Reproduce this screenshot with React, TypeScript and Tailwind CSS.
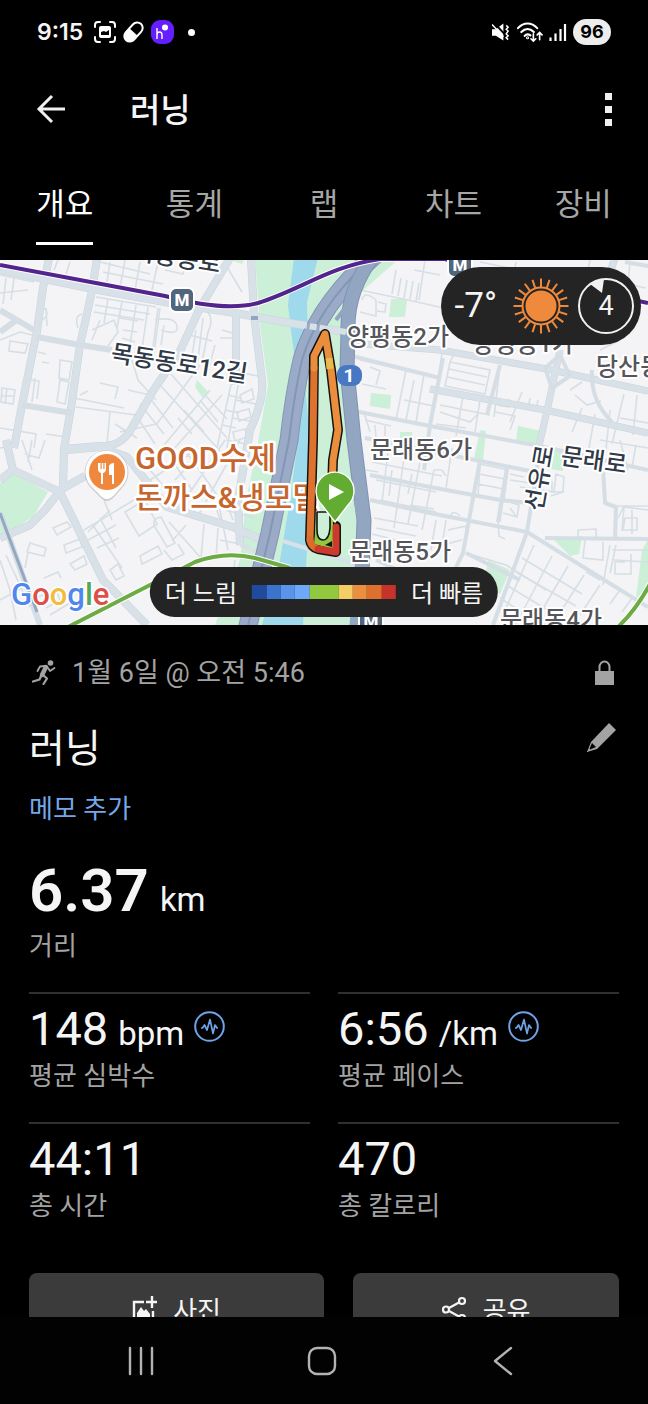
import React from 'react';

const tabs = ['개요', '통계', '랩', '차트', '장비'];

const stats = [
    { value: '148', unit: 'bpm', label: '평균 심박수', pulse: true },
    { value: '6:56', unit: '/km', label: '평균 페이스', pulse: true },
    { value: '44:11', unit: '', label: '총 시간', pulse: false },
    { value: '470', unit: '', label: '총 칼로리', pulse: false },
];

const StatusBar = () => (
    <div className="flex h-16 shrink-0 items-center justify-between pl-[37px] pr-[37px]">
        <div className="flex items-center gap-[7px]">
            <span className="mr-1 font-['Inter',sans-serif] text-[23px] font-semibold leading-8">9:15</span>
            <svg width="22" height="22" viewBox="0 0 22 22" fill="none" stroke="#fff" strokeWidth="2" strokeLinecap="round">
                <path d="M1 6V4a3 3 0 0 1 3-3h2M16 1h2a3 3 0 0 1 3 3v2M21 16v2a3 3 0 0 1-3 3h-2M6 21H4a3 3 0 0 1-3-3v-2" />
                <path d="M7 5h8a2 2 0 0 1 2 2v8a2 2 0 0 1-2 2H7a2 2 0 0 1-2-2V7a2 2 0 0 1 2-2z" fill="#fff" stroke="none" />
                <path d="M7 14v-3l3-1 2 1 3-2v5z" fill="#000" stroke="none" />
            </svg>
            <svg width="21" height="22" viewBox="0 0 21 22">
                <g transform="rotate(42 10.5 11)">
                    <rect x="5" y="0" width="11" height="22" rx="5.5" fill="none" stroke="#fff" strokeWidth="2" />
                    <path d="M5 11h11v5.500a5.500 5.500 0 0 1-11 0z" fill="#fff" />
                </g>
            </svg>
            <svg width="23" height="24" viewBox="0 0 23 24">
                <rect width="23" height="24" rx="9" fill="#651fff" />
                <path d="M6 8v11M6 15c0-4 5-4 5 0v4" fill="none" stroke="#fff" strokeWidth="1.400" />
                <circle cx="14" cy="7.500" r="3" fill="#fff" />
            </svg>
            <span className="ml-[7px] size-[7px] rounded-full bg-white" />
        </div>
        <div className="flex items-center gap-[6px]">
            <svg width="18" height="19" viewBox="0 0 19 19" fill="none" stroke="#fff" strokeWidth="1.600">
                <path d="M0 6h4l8-6v18l-8-5H0z" fill="#fff" stroke="none" />
                <path d="M2 -1l12 13" stroke="#000" strokeWidth="2" />
                <path d="M0 1l12 13" strokeWidth="1.600" />
                <path d="M15 2l2 2-2 2 2 2-2 3 2 2-2 2 2 2" />
            </svg>
            <svg width="27" height="22" viewBox="0 0 28 22" fill="none" stroke="#fff" strokeWidth="2.200" strokeLinecap="round">
                <path d="M2 7c6-6.500 14-6.500 20 0M5.500 11c4-4 9-4 13 0M9 15c1.500-1.700 4-1.700 6-.5" />
                <circle cx="12" cy="17" r=".5" />
                <path d="M18 13v7M15.500 18l2.500 2.500 2.500-2.500M24.500 19v-7M22 14l2.500-2.500L27 14" strokeWidth="1.700" />
            </svg>
            <svg width="18" height="19" viewBox="0 0 18 19" stroke="#fff" strokeWidth="2.200">
                <path d="M1.500 14.500V18M6.500 10.500V18M11.500 6v12M16 1v17" />
            </svg>
            <span className="flex h-[26px] w-[38px] items-center justify-center rounded-full bg-[#ededed] font-['Inter',sans-serif] text-[18px] font-bold leading-none text-black">
                96
            </span>
        </div>
    </div>
);

const Station = ({ x, y }: { x: number; y: number }) => (
    <g>
        <rect x={x - 13} y={y - 13} width="26" height="26" rx="7" fill="#fff" />
        <rect x={x - 11} y={y - 11} width="22" height="22" rx="5" fill="#51657d" />
        <text x={x} y={y + 6} textAnchor="middle" fontSize="17" fontWeight="800" fill="#fff">M</text>
    </g>
);

const RouteMap = () => (
    <svg
        className="block h-[365px] w-full font-['Roboto','Noto_Sans_CJK_KR',sans-serif]"
        viewBox="0 260 648 365"
        preserveAspectRatio="xMidYMid slice"
        role="img"
        aria-label="러닝 경로 지도"
    >
        <rect y="260" width="648" height="365" fill="#f4f3f5" />

        {/* parks */}
        <g fill="#ccefd8">
            <path d="M255 258H400L352 300L344 360L354 440L364 530L350 625H215L240 560L246 500L257 448L268 385L260 325Z" />
            <path d="M0 483L12 473L48 492L33 517L0 537Z" />
            <path d="M197 380l12 13-6 5-8-11zM391 299h16l-2 18h-16zM371 393l20 2-1 14-20-3zM518 426l24 5-3 14-23-4zM480 430l6 1-3 30-9-2zM552 450l12 1-1 20-13-2zM554 540l28-4-3 18-9 2zM488 560l22 10-10 24-16-9zM642 550l6-10v50l-12 8zM400 432h12v8h-12zM225 258h20l-3 6z" />
        </g>

        {/* river */}
        <path
            d="M294 258H318L307 302L308 340L305 385L309 430L308 530L303 625H262L280 560L290 500L298 440L300 400L291 330L288 305Z"
            fill="#9fd9ec"
        />
        <path d="M312 340L322 330L346 355L353 440L357 540L352 570H310Z" fill="#ccefd8" />

        {/* side streets */}
        <g fill="none" stroke="#d6dfe5" strokeWidth="1.600">
            <path d="M100 262l50 12M103 272l60 12M110 262l-3 20M125 260l-5 28M140 262l-5 28M158 262l-6 28M165 270l18 4 3-12M96 297l60 10M95 305l55 9M94 312l50 8M108 299l-4 24M122 302l-5 26M136 305l-6 40M148 307l-6 42M158 308l-5 40M92 330l22-10 4 12-10 14M100 320l-8 20M120 318l18 3M123 330l14 2M122 338l13 4" />
            <path d="M155 320q20-4 22 6t-16 4M160 308l-6 45M164 325l-3 20M190 335l22 6M196 330l-4 26M203 318l-6 50M208 312q6 8 0 20l-6 30M215 345l-8 30" />
            <path d="M0 275l34 7M6 278l-3 26M14 278l-3 22M0 293l28-3M46 308l1 18M42 306q10 8 0 14M82 314q-8 2-4 14M58 260l-4 10M70 262l-4 12" />
            <path d="M10 341l18 3-3 9-16-2zM0 340l20-8 12 3M38 352l8 2M42 362l7 1M35 378l-3 24M31 380l8 1-2 18M60 360l12 2-3 18-10-2zM60 380l-3 22 8 2 4-22zM2 388l13 2-2 14-12-2zM7 388l-2 16M2 396h12" />
            <path d="M74 398l50 10M76 407l60 8M110 411l-3 33M100 383l18 4-3 12M128 390l22 5M80 395l8-4M132 360l6 20 18 20M160 385l60 66M171 374l56 64M200 365l-44 60M210 390l-50 60M222 395l-50 56M148 396l25 32M140 404l24 30M135 414l20 30M178 418l14 16M184 410l20 22M200 400l18 22M205 395l22 24M232 380l-15 68M239 380l-12 68M228 395l12 3M225 410l14 3M222 425l14 3M120 432l36-8M115 424l22 14M0 428l36 6-2 14M46 434l20 3" />
            <path d="M22 440l10 30M32 440l-4 22M45 440l-6 18-14-4M0 448l12-2M50 498l-15 22M30 543l16 5-2 8-17-4zM28 552l-3 16M53 528l14-6 4 5-14 8zM64 545l16-6 2 8-16 6zM70 564l14-8 3 8-12 6zM30 600l26-10 4 10-14 8M44 578l14-6 3 6M0 600l22-12M50 615l20-12M84 530l60-36M88 540l28-15M92 524l30 44M100 518l16 30M97 548l22-10M110 510l-22 22M104 500l8 20" />
            <path d="M125 512l20-12 12 24-18 12zM155 527q-4-8 6-10l14 26-8 4zM140 556l18-10 4 8-20 10zM164 550l8 10 12-6-6-10M110 570l8-6 6 12-8 4zM204 524l-3 34-32-36M186 525l-14 16M218 528l-2 30M158 580l20-9M150 480l40-26M150 470l30 36M172 460l20 30M185 450l32 45M205 448l-30 32M225 440l-40 60M240 440l-42 76M215 505l8 22M225 500l8 20" />
            <path d="M222 330l14 4M238 338h-18M236 400l20 4M232 418l24 4M226 440l20 4M240 395l12-6 2 10-12 4zM237 412l12-3 2 8-12 4zM233 432l12-3 2 8-12 4zM228 370l30 6M224 262l18 30" />
            <path d="M360 290l48 10M362 300q2-10 14 0v16l-16-4M378 302l8 2-1 8-8-1M396 270l-4 24M401 278l-3 18M407 280l-3 18M413 281l-3 18M419 283l-3 18M425 260l-6 40M414 270l26 5M408 300l40 9" />
            <path d="M360 360l80 18M362 384l24 5M370 367l10 4-4 14M406 370l-10 50M424 374l-8 48M444 340l-6 40M365 420l26 6M375 425l1 12M385 426v10M404 400l30 6M414 380l-8 40M364 412l6 20" />
            <path d="M450 362l40 8-5 24-40-8zM449 369l38 8M447 377l38 8M454 354l-4 8M500 365l-6 52M440 405l50 10M463 396l-7 40M480 400l-5 32M497 405l12 2v-8M522 392l-12 30M440 412l30 10 8-8M530 398l-2 12M538 400l-2 10M436 424l30 4M495 412l20 4-5 14M575 395l12 10 14-4M582 408l-10 24M570 390l12-8M595 414l-6 34M610 410l-4 40M624 394l-12 50M637 395l-4 40M590 340l5-22 20 5M600 350l20-10M590 260l-8 40M610 262l-6 36M630 262l-2 22 18 4M480 352l8 6M620 418l28 5M600 440l48 8M480 262l40 8M516 262l-3 16" />
            <path d="M452 448l-6 40M434 470h8l4 6M480 464l28 6-4 30-26-4zM479 474l26 5M478 484l26 5M507 470l-7 52M510 474l14 3M510 480l20 3M503 500l16 5-2 12-14-4M510 508l6 8M520 487l34 5 2-18 8 3-1 15-12 4M530 478l22 4v10h12M450 518q2-10 10-2M436 520l-5 30M446 520l-5 32M448 530l18-4v12M498 522l1 14 6 3M462 540l-16 4" />
            <path d="M466 553l40 12 40 25M578 540v-10l18-1v9M585 540l-2 18 20 2v-18M610 545l-7 40M612 550h36M614 560l34 2M616 545l-6 28M625 562h-10v12h16v-20M618 506h30M618 518l6-12h24M625 518h12v12h-14zM632 510v24M620 440l8 30M636 445l-4 22M648 510l-24-3-2 24" />
            <path d="M534 545l-32 72M552 556l-36 68M568 566l-34 58M584 575l-28 44M600 585l-20 30M522 558l60 36M516 572l60 34M508 586l56 34M500 598l40 26M600 580l-14-8M620 590l-10 14M632 598l-10 14" />
            <path d="M372 462l70 14M376 480l60 12M380 500l56 12M374 518l44 8M372 534l40 10M388 452l-6 50M404 458l-10 70M420 462l-12 62M434 470l-12 60M366 470l12 2M392 470l-3 26M412 474l-4 20M376 528l40 8M410 505l24 4" />
            <path d="M0 560l10 30 6 30M6 555l24 52M225 510l30 8M220 540l30 6M235 560l-4 30M218 500l10 50M200 570l40 20" />
        </g>

        {/* main roads */}
        <g fill="none" strokeLinejoin="round">
            <path
                d="M0 270L93 289L170 303L235 313L290 323L346 332M230 258L200 308L180 351L153 391L130 431Q120 447 100 446L64 449M43 288L49 258M236 310L236 385M251 258L254 315L262 380Q264 400 250 430L238 500L240 545M0 538L30 525L45 510L63 487L64 449L71 408L80 345L92 291L97 258M14 448L22 405L37 331L43 288M13 470L60 492L80 533L103 580L147 625M13 470L0 480M6 440L13 470M67 450L100 447L127 457L167 507L233 527L262 540M60 490L85 476"
                stroke="#c9d4dc"
                strokeWidth="8"
            />
            <path
                d="M0 270L93 289L170 303L235 313L290 323L346 332M230 258L200 308L180 351L153 391L130 431Q120 447 100 446L64 449M43 288L49 258M236 310L236 385M251 258L254 315L262 380Q264 400 250 430L238 500L240 545M0 538L30 525L45 510L63 487L64 449L71 408L80 345L92 291L97 258M14 448L22 405L37 331L43 288M13 470L60 492L80 533L103 580L147 625M13 470L0 480M6 440L13 470M67 450L100 447L127 457L167 507L233 527L262 540M60 490L85 476"
                stroke="#d8e1e7"
                strokeWidth="7"
            />
            <path d="M37 337L80 345M22 405L72 413M0 310L34 330M0 332L18 319M80 345L112 350M10 540L40 625M0 513L12 545" stroke="#d5dee5" strokeWidth="6" />
            <path d="M350 343L440 350L547 369L648 391M560 350L547 411L538 450M615 258L605 290L592 340M430 389L550 411L648 433" stroke="#c9d4dc" strokeWidth="7" />
            <path d="M350 343L440 350L547 369L648 391M560 350L547 411L538 450M615 258L605 290L592 340M430 389L550 411L648 433" stroke="#d8e1e7" strokeWidth="6" />
            <path d="M545 368L560 355L570 376L552 388ZM592 370Q590 400 612 422M443 358L430 425L424 470M500 365L487 415M352 356L440 378M354 411L430 426L540 446L648 470M365 438L480 461L545 474M370 475L430 487L500 500L530 503M370 500L430 513L527 532L648 607M480 460L463 553L440 600M507 468L498 522M540 450L527 532L493 625M603 467L605 503L616 507L615 537M545 538L648 539M466 553L520 580M625 262L648 266M376 560L420 580" stroke="#d5dee5" strokeWidth="4" />
            <path d="M0 513L10 540L37 612" stroke="#94a8c1" strokeWidth="3" />
            <path d="M283 541L352 563L375 575M240 545L265 555" stroke="#d8e1e7" strokeWidth="4" />
        </g>

        {/* expressways on both banks */}
        <g fill="none" strokeLinejoin="round">
            <path d="M375 255Q318 305 302 360Q294 395 289 440L270 533L247 630" stroke="#8296b6" strokeWidth="19" />
            <path d="M375 255Q318 305 302 360Q294 395 289 440L270 533L247 630" stroke="#9babc7" strokeWidth="17" />
            <path d="M375 255Q318 305 302 360Q294 395 289 440L270 533L247 630" stroke="#8296b6" strokeWidth="2" />
            <path d="M374 255Q347 290 348 330L347 370L354 440L364 520L360 630" stroke="#7f94b3" strokeWidth="15" />
            <path d="M374 255Q347 290 348 330L347 370L354 440L364 520L360 630" stroke="#92a5c1" strokeWidth="13" />
            <path d="M356 500L364 540L368 625L352 625L360 540" fill="#92a5c1" stroke="#92a5c1" strokeWidth="5" />
            <path d="M351 300L336 320M251 318h7" stroke="#92a5c1" strokeWidth="4" />
            <path d="M290 323L346 332" stroke="#d8e1e7" strokeWidth="6" strokeDasharray="7 3" />
        </g>

        {/* subway lines */}
        <g fill="none">
            <path d="M0 265L165 296Q225 312 258 303C300 290 330 266 380 259L440 258L470 265M560 284L648 303" stroke="#fff" strokeWidth="6" />
            <path d="M0 265L165 296Q225 312 258 303C300 290 330 266 380 259L440 258L470 265M560 284L648 303" stroke="#52258c" strokeWidth="4" />
            <path d="M68 627L150 585L195 562Q225 551 255 558L290 568M618 627Q636 610 650 584" stroke="#fff" strokeWidth="6" />
            <path d="M68 627L150 585L195 562Q225 551 255 558L290 568M618 627Q636 610 650 584" stroke="#6dac44" strokeWidth="4" />
        </g>

        <Station x={182} y={300} />
        <Station x={460} y={265} />
        <Station x={371} y={621} />

        {/* place names */}
        <g fontSize="24" fontWeight="500" fill="#55565b" stroke="#fff" strokeWidth="4" strokeLinejoin="round" paintOrder="stroke">
            <text x="347" y="345">양평동2가</text>
            <text x="472" y="352">양평동1가</text>
            <text x="596" y="375">당산동</text>
            <text x="370" y="458">문래동6가</text>
            <text x="349" y="560">문래동5가</text>
            <text x="500" y="628">문래동4가</text>
            <g fill="#303a49">
                <text transform="translate(110 361) rotate(9)">목동동로12길</text>
                <text transform="translate(132 259) rotate(9)">목동동로</text>
                <text transform="translate(560 464) rotate(8)">문래로</text>
                <text transform="translate(542 512) rotate(-80)">선유로</text>
            </g>
        </g>
        <g fontSize="31" fontWeight="500" fill="#c6662e" stroke="#fff" strokeWidth="5" strokeLinejoin="round" paintOrder="stroke">
            <text x="135" y="469">GOOD수제</text>
            <text x="135" y="508" fontSize="30">돈까스&amp;냉모밀</text>
        </g>

        <path d="M107 501Q103 501 98 495L91 488A22 22 0 1 1 122 488L116 495Q111 501 107 501Z" fill="#8a8a8a" opacity=".35" />
        <path d="M107 499Q103 499 98 493L91 486A21 21 0 1 1 122 486L116 493Q111 499 107 499Z" fill="#fff" />
        <circle cx="107" cy="472" r="18" fill="#ef883c" />
        <path d="M98 463v6q0 3 3 4v11h2v-11q3-1 3-4v-6h-1.500v6h-1.200v-6h-1.600v6h-1.200v-6zM109 466q1-3 5-3v21h-2v-9h-3z" fill="#fff" />

        {/* run track */}
        <g fill="none" strokeLinejoin="round" strokeLinecap="round">
            <path d="M332 490L333 460L338 430L331 370L325 334L314 356L313 440L310 540Q311 547 318 549L336 552L336 526" stroke="#14140f" strokeWidth="10" />
            <path d="M317 512L314 544L333 549L333 512Z" fill="#92c83e" stroke="none" />
            <path d="M317 512V530Q317 540 323 540Q329 540 330 528V512Z" fill="#ccefd8" stroke="#14140f" strokeWidth="1.600" />
            <path d="M325 545L332 541L332 547Z" fill="#14140f" stroke="none" />
            <path d="M314 368L313 440L310 540" stroke="#de722f" strokeWidth="7" />
            <path d="M332 490L333 460L338 430L331 370L325 334L314 356V368" stroke="#ea8e3d" strokeWidth="7" />
            <path d="M329 358L330 369" stroke="#e9b94c" strokeWidth="7" strokeLinecap="butt" />
            <path d="M310 540Q311 547 318 549" stroke="#dd6b2c" strokeWidth="7" />
            <path d="M318 549L336 552L336 527" stroke="#cb3a2c" strokeWidth="7" />
        </g>
        <path d="M335 522L322 505A19 19 0 1 1 348 505Z" fill="#63ac32" stroke="#fff" strokeWidth="1.400" />
        <path d="M329 484v16l15-8z" fill="#fff" />

        <rect x="337" y="365" width="25" height="21" rx="9" fill="#4877c3" />
        <text x="349" y="382" textAnchor="middle" fontSize="19" fontWeight="700" fill="#fff">1</text>

        <text x="11" y="605" fontSize="31" fontWeight="500" stroke="#fff" strokeWidth="3" paintOrder="stroke">
            <tspan fill="#5087ec">G</tspan>
            <tspan fill="#db5147">o</tspan>
            <tspan fill="#f0bd3e">o</tspan>
            <tspan fill="#5087ec">g</tspan>
            <tspan fill="#58a65c">l</tspan>
            <tspan fill="#db5147">e</tspan>
        </text>
    </svg>
);

const rays = Array.from({ length: 20 }, (_, i) => i * 18);

const Weather = () => (
    <div className="absolute right-[7px] top-[7px] flex h-[78px] items-center rounded-full bg-[#242424] pl-[14px] pr-[7px]">
        <span className="mr-4 text-[35px] leading-10">-7°</span>
        <svg className="mr-[9px]" width="56" height="56" viewBox="-28 -28 56 56" fill="none" stroke="#ef8a3c">
            <circle r="15.500" fill="#ef8a3c" stroke="none" />
            <circle r="18.500" strokeWidth="2" />
            {rays.map((a) => (
                <path key={a} d="M0-19V-27.500" strokeWidth="2" transform={`rotate(${a})`} />
            ))}
        </svg>
        <span className="relative flex size-14 items-center justify-center text-[27px] leading-none">
            <svg className="absolute inset-0" width="56" height="56" viewBox="0 0 56 56">
                <circle cx="28" cy="28" r="27" fill="none" stroke="#f2f2f2" strokeWidth="2" />
                <path d="M12 6Q18 2 26 1L24 15Z" fill="#f2f2f2" />
            </svg>
            4
        </span>
    </div>
);

const PaceLegend = () => (
    <div className="absolute bottom-2 left-1/2 flex h-[50px] -translate-x-1/2 items-center gap-[15px] whitespace-nowrap rounded-full bg-[#242424] px-[15px] text-2xl">
        <span className="pt-[3px]">더 느림</span>
        <span className="grid h-[14px] w-36 grid-cols-10">
            <i className="bg-[#204b9d]" />
            <i className="bg-[#3b74cf]" />
            <i className="bg-[#5796eb]" />
            <i className="bg-[#6da9f8]" />
            <i className="col-span-2 bg-[#92c83f]" />
            <i className="bg-[#f5cd67]" />
            <i className="bg-[#ea8f3f]" />
            <i className="bg-[#de702e]" />
            <i className="bg-[#c5332b]" />
        </span>
        <span className="pt-[3px]">더 빠름</span>
    </div>
);

const PulseIcon = () => (
    <svg width="31" height="31" viewBox="0 0 31 31" fill="none" stroke="#6ea3e6" strokeWidth="2" strokeLinejoin="round">
        <circle cx="15.500" cy="15.500" r="14.300" />
        <path d="M7 17h1.500l2-3 2.500 5 3-10.500 3 14 2-8.500 2 3h1" strokeWidth="1.700" />
    </svg>
);

const App = () => {
    return (
        <div className="flex h-screen flex-col bg-black font-['Roboto','Noto_Sans_CJK_KR',sans-serif] text-[#f5f5f5]">
            <StatusBar />

            <header className="flex h-[90px] shrink-0 items-center pl-[36px] pr-[36px]">
                <button type="button" aria-label="뒤로">
                    <svg width="30" height="30" viewBox="0 0 30 30" fill="none" stroke="#f0f0f0" strokeWidth="3">
                        <path d="M29 15H3M16 2L3 15l13 13" />
                    </svg>
                </button>
                <h1 className="ml-16 flex-1 pt-[3px] text-[33px] font-medium leading-10">러닝</h1>
                <button type="button" aria-label="더보기" className="flex flex-col gap-[6px]">
                    <i className="size-[7px] bg-[#f0f0f0]" />
                    <i className="size-[7px] bg-[#f0f0f0]" />
                    <i className="size-[7px] bg-[#f0f0f0]" />
                </button>
            </header>

            <nav className="grid h-[106px] shrink-0 grid-cols-5 pt-[31px] text-[31px] leading-10">
                {tabs.map((tab, i) => (
                    <a
                        key={tab}
                        href="#"
                        className={
                            i === 0
                                ? 'h-[60px] justify-self-center border-b-[3px] border-white text-white'
                                : 'h-[60px] justify-self-center text-[#a6a6a6]'
                        }
                    >
                        {tab}
                    </a>
                ))}
            </nav>

            <main className="min-h-0 flex-1 overflow-y-auto [scrollbar-width:none]">
                <div className="relative overflow-hidden">
                    <RouteMap />
                    <Weather />
                    <PaceLegend />
                </div>

                <section className="px-[29px] pb-8 pt-[27px]">
                    <div className="flex h-10 items-center text-[27px] text-[#a3a3a3]">
                        <svg className="ml-[3px] mr-4" width="24" height="25" viewBox="0 0 24 25" fill="none" stroke="#a3a3a3" strokeLinecap="round" strokeLinejoin="round">
                            <circle cx="18.500" cy="3" r="2.800" fill="#a3a3a3" stroke="none" />
                            <path d="M14 7l-4 8" strokeWidth="4.500" />
                            <path d="M13 6L8 6.500 5.500 11M16 8l2 3 4.500-3" strokeWidth="1.800" />
                            <path d="M11 15l4 3.500-3.500 5.500M9.500 15L7.500 19.500 1 21.500" strokeWidth="2.200" />
                        </svg>
                        <span className="flex-1 pt-[3px]">1월 6일 @ 오전 5:46</span>
                        <svg className="mr-[5px]" width="19" height="25" viewBox="0 0 19 25">
                            <path d="M4.500 12V7a5 5.500 0 0 1 10 0v5" fill="none" stroke="#a3a3a3" strokeWidth="2" />
                            <path d="M0 11h19v14H0z" fill="#a3a3a3" />
                        </svg>
                    </div>

                    <div className="mt-[31px] flex h-12 items-center justify-between">
                        <h2 className="pt-[3px] text-[39px] leading-[48px]">러닝</h2>
                        <button type="button" aria-label="편집" className="mb-5 mr-[2px]">
                            <svg width="31" height="31" viewBox="0 0 31 31">
                                <path d="M1 30L5 20 23 1l7 7-19 19z" fill="#a3a3a3" />
                                <path d="M3 28l3-7 4 4z" fill="#000" />
                                <path d="M1 30l3-3" stroke="#a3a3a3" />
                            </svg>
                        </button>
                    </div>

                    <a href="#" className="mt-[22px] block w-fit text-[26px] leading-8 text-[#74a7ea]">메모 추가</a>

                    <div className="mt-[34px] h-16 text-[60px] font-semibold leading-[64px]">
                        6.37<span className="ml-[11px] text-[33px] font-normal leading-none">km</span>
                    </div>
                    <div className="mt-[9px] text-[26px] leading-7 text-[#a3a3a3]">거리</div>

                    <div className="mt-8 grid grid-cols-2 gap-x-7 gap-y-8">
                        {stats.map((stat) => (
                            <div key={stat.label} className="border-t-2 border-[#303030] pt-[7px]">
                                <div className="flex h-14 text-[47px] leading-[56px]">
                                    <div>
                                        {stat.value}
                                        {stat.unit && <span className="ml-[10px] text-[33px] leading-none">{stat.unit}</span>}
                                    </div>
                                    {stat.pulse && (
                                        <span className="ml-[10px] mt-[10px]">
                                            <PulseIcon />
                                        </span>
                                    )}
                                </div>
                                <div className="mt-[5px] text-[26px] leading-7 text-[#a3a3a3]">{stat.label}</div>
                            </div>
                        ))}
                    </div>

                    <div className="mt-[53px] flex gap-[29px] text-[26px] leading-8">
                        <button type="button" className="flex h-[72px] flex-[10] items-center justify-center gap-4 rounded-lg bg-[#3b3b3b]">
                            <svg width="25" height="27" viewBox="0 0 25 27" fill="none" stroke="#f5f5f5" strokeWidth="2.400">
                                <path d="M12 6H2v19h19V15M20 0v12M14 6h11" />
                                <path d="M5 21v-4l4-6 3 4 2-2 4 5v3z" fill="#f5f5f5" stroke="none" />
                            </svg>
                            <span className="pt-[3px]">사진</span>
                        </button>
                        <button type="button" className="flex h-[72px] flex-[9] items-center justify-center gap-4 rounded-lg bg-[#3b3b3b]">
                            <svg width="25" height="27" viewBox="0 0 25 27" fill="none" stroke="#f5f5f5" strokeWidth="2.200">
                                <circle cx="20" cy="5" r="3" />
                                <circle cx="4" cy="13.500" r="3" />
                                <circle cx="20" cy="22" r="3" />
                                <path d="M7 12l10-5.500M7 15l10 5.500" />
                            </svg>
                            <span className="pt-[3px]">공유</span>
                        </button>
                    </div>
                </section>
            </main>

            <footer className="grid h-[87px] shrink-0 grid-cols-3 place-items-center bg-[#020202] pl-[50px] pr-[54px]">
                <button type="button" aria-label="최근 앱">
                    <svg width="28" height="30" viewBox="0 0 28 30" stroke="#b3b3b3" strokeWidth="2.400" strokeLinecap="round">
                        <path d="M3 2v26M14 2v26M25 2v26" />
                    </svg>
                </button>
                <button type="button" aria-label="홈">
                    <svg width="30" height="30" viewBox="0 0 30 30" fill="none" stroke="#b3b3b3" strokeWidth="2.400">
                        <rect x="2" y="2" width="26" height="26" rx="8" />
                    </svg>
                </button>
                <button type="button" aria-label="이전">
                    <svg width="20" height="30" viewBox="0 0 20 30" fill="none" stroke="#b3b3b3" strokeWidth="2.400" strokeLinecap="round" strokeLinejoin="round">
                        <path d="M18 2L2 15l16 13" />
                    </svg>
                </button>
            </footer>
        </div>
    );
};

export default App;
